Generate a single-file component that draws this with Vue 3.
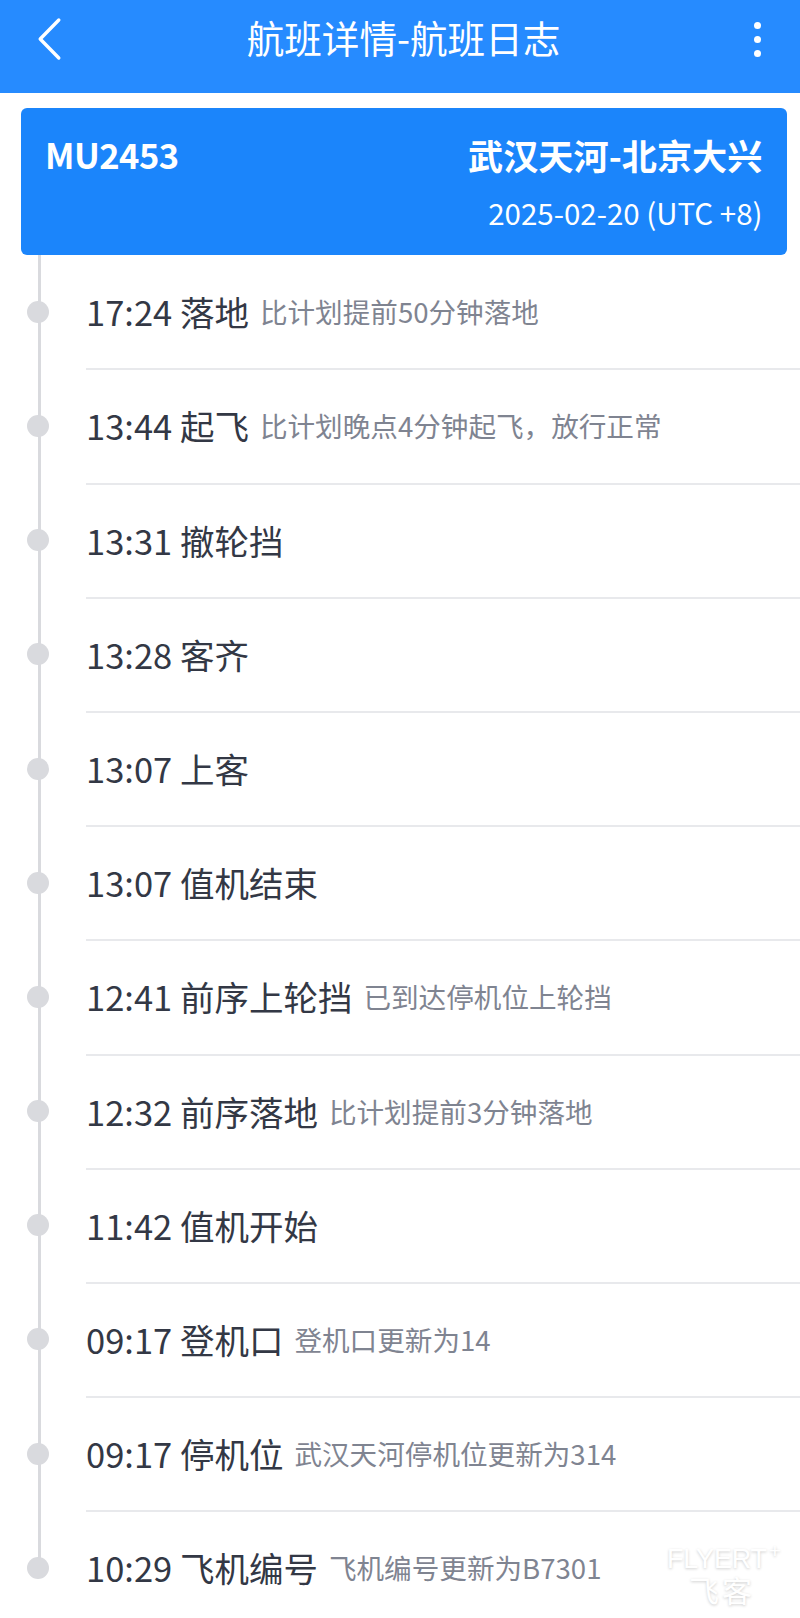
<template>
  <div class="page">
    <header class="topbar">
      <svg class="back" width="30" height="46" viewBox="0 0 30 46">
        <path d="M23.8 4 L5.2 23 L23.8 42" fill="none" stroke="#fff" stroke-width="3.4" stroke-linecap="round" stroke-linejoin="round" />
      </svg>
      <h1>航班详情-航班日志</h1>
      <div class="more">
        <span></span>
        <span></span>
        <span></span>
      </div>
    </header>

    <section class="flight-card">
      <div class="flight-top">
        <span class="flight-no">MU2453</span>
        <span class="route">武汉天河-北京大兴</span>
      </div>
      <div class="flight-date">2025-02-20 (UTC +8)</div>
    </section>

    <ul class="log">
      <li v-for="item in logs" :key="item.time + item.title" class="log-row">
        <span class="dot"></span>
        <div class="log-body">
          <span class="log-title">{{ item.time }} {{ item.title }}</span>
          <span v-if="item.note" class="log-note">{{ item.note }}</span>
        </div>
      </li>
    </ul>

    <div class="watermark">
      <span class="wm-en">FLYERT<sup>+</sup></span>
      <span class="wm-cn">飞客</span>
    </div>
  </div>
</template>

<script setup>
const logs = [
  { time: '17:24', title: '落地', note: '比计划提前50分钟落地' },
  { time: '13:44', title: '起飞', note: '比计划晚点4分钟起飞，放行正常' },
  { time: '13:31', title: '撤轮挡' },
  { time: '13:28', title: '客齐' },
  { time: '13:07', title: '上客' },
  { time: '13:07', title: '值机结束' },
  { time: '12:41', title: '前序上轮挡', note: '已到达停机位上轮挡' },
  { time: '12:32', title: '前序落地', note: '比计划提前3分钟落地' },
  { time: '11:42', title: '值机开始' },
  { time: '09:17', title: '登机口', note: '登机口更新为14' },
  { time: '09:17', title: '停机位', note: '武汉天河停机位更新为314' },
  { time: '10:29', title: '飞机编号', note: '飞机编号更新为B7301' }
]
</script>

<style>
html, body {
  background: #fff;
}
</style>

<style scoped>
.page {
  position: relative;
  width: 800px;
  height: 1618px;
  overflow: hidden;
  background: #fff;
  font-family: "Noto Sans CJK SC", "Noto Sans", sans-serif;
}

.topbar {
  height: 92.5px;
  background: #268bff;
  display: flex;
  align-items: flex-start;
  justify-content: space-between;
  padding: 0 39px 0 35px;
  color: #fff;
}

.back {
  margin-top: 16px;
}

.topbar h1 {
  margin: 12px 12px 0 0;
  font-size: 37.6px;
  line-height: 50px;
  font-weight: 400;
}

.more {
  display: flex;
  flex-direction: column;
  gap: 7px;
  margin-top: 21.5px;
  width: 7px;
}

.more span {
  width: 7px;
  height: 7px;
  border-radius: 50%;
  background: #fff;
}

.flight-card {
  margin: 15.5px 13.5px 0 21px;
  height: 147px;
  box-sizing: border-box;
  padding: 20px 24px 0 24px;
  background: #1b85fb;
  border-radius: 6px;
  color: #fff;
}

.flight-top {
  display: flex;
  justify-content: space-between;
  align-items: center;
  height: 52px;
}

.flight-no {
  font-size: 34.5px;
  font-weight: 700;
  letter-spacing: -0.5px;
}

.route {
  font-size: 35.2px;
  font-weight: 700;
}

.flight-date {
  margin-top: 10px;
  text-align: right;
  font-size: 29.5px;
  line-height: 44px;
}

.log {
  list-style: none;
  margin: 0;
  padding: 1.2px 0 0;
  position: relative;
}

.log::before {
  content: "";
  position: absolute;
  left: 38px;
  top: 0;
  bottom: 50px;
  width: 3px;
  background: #d9dade;
}

.log-row {
  position: relative;
  height: 114.2px;
  padding-left: 86px;
}

.dot {
  position: absolute;
  left: 27px;
  top: 44.6px;
  width: 22px;
  height: 22px;
  border-radius: 50%;
  background: #d9dade;
}

.log-body {
  box-sizing: border-box;
  height: 100%;
  border-bottom: 2px solid #e8e9ec;
  display: flex;
  align-items: center;
  gap: 11px;
  padding-bottom: 2px;
}

.log-title {
  font-size: 34.5px;
  color: #333845;
}

.log-note {
  font-size: 27.6px;
  color: #7f8491;
}

.watermark {
  position: absolute;
  left: 667px;
  top: 1544px;
  width: 130px;
  display: flex;
  flex-direction: column;
  color: #fff;
  text-shadow: 0 1px 3px rgba(0, 0, 0, 0.2);
}

.wm-en {
  font-family: "Liberation Sans", sans-serif;
  font-size: 27px;
  line-height: 30px;
  letter-spacing: -0.2px;
}

.wm-en sup {
  font-size: 21px;
  line-height: 0;
  margin-left: 2px;
}

.wm-cn {
  margin-left: 22px;
  font-size: 30px;
  line-height: 30px;
  letter-spacing: 3px;
}
</style>
